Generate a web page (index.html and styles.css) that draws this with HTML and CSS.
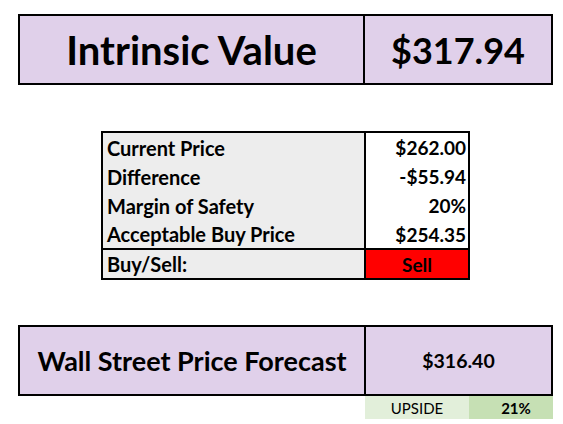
FILE: index.html
```html
<!DOCTYPE html>
<html>
<head>
<meta charset="utf-8">
<link rel="stylesheet" href="styles.css">
</head>
<body>
<div class="page">
  <div class="hero">
    <div class="hero-label">Intrinsic Value</div>
    <div class="hero-value">$317.94</div>
  </div>

  <div class="table">
    <div class="labels">
      <div class="row">Current Price</div>
      <div class="row">Difference</div>
      <div class="row">Margin of Safety</div>
      <div class="row">Acceptable Buy Price</div>
    </div>
    <div class="values">
      <div class="row">$262.00</div>
      <div class="row">-$55.94</div>
      <div class="row">20%</div>
      <div class="row">$254.35</div>
    </div>
    <div class="buy-label">Buy/Sell:</div>
    <div class="buy-value">Sell</div>
  </div>

  <div class="forecast">
    <div class="forecast-label">Wall Street Price Forecast</div>
    <div class="forecast-value">$316.40</div>
  </div>
  <div class="upside">
    <div class="upside-label">UPSIDE</div>
    <div class="upside-value">21%</div>
  </div>
</div>
</body>
</html>
```

FILE: styles.css
```css
html, body {
  margin: 0;
  padding: 0;
  background: #fff;
}
.page {
  font-family: Lato, "Open Sans", sans-serif;
  color: #000;
  display: flex;
  flex-direction: column;
  padding-top: 14px;
}
.hero {
  margin-left: 18px;
  width: 535px;
  height: 71px;
  box-sizing: border-box;
  border: 2px solid #000;
  background: #e0d0ea;
  display: grid;
  grid-template-columns: 345px 1fr;
}
.hero-label, .hero-value {
  display: flex;
  align-items: center;
  justify-content: center;
  font-weight: 700;
  font-size: 40px;
}
.hero-value {
  font-size: 36px;
}
.hero-label {
  border-right: 2px solid #000;
}
.table {
  margin-top: 46px;
  margin-left: 101px;
  width: 369px;
  box-sizing: border-box;
  border: 2px solid #000;
  display: grid;
  grid-template-columns: 263px 102px;
  font-weight: 700;
  font-size: 19px;
}
.labels {
  background: #ededed;
  border-right: 2px solid #000;
  border-bottom: 2px solid #000;
  font-size: 20px;
}
.values {
  background: #fff;
  border-bottom: 2px solid #000;
}
.row {
  height: 29px;
  display: flex;
  align-items: center;
}
.row:last-child {
  height: 28px;
}
.labels .row {
  padding-left: 4px;
}
.values .row {
  justify-content: flex-end;
  padding-right: 2px;
}
.buy-label {
  background: #ededed;
  border-right: 2px solid #000;
  height: 28px;
  display: flex;
  align-items: center;
  padding-left: 4px;
  font-size: 20px;
}
.buy-value {
  background: #ff0000;
  height: 28px;
  display: flex;
  align-items: center;
  justify-content: center;
}
.forecast {
  margin-top: 45px;
  margin-left: 18px;
  width: 535px;
  height: 71px;
  box-sizing: border-box;
  border: 2px solid #000;
  background: #e0d0ea;
  display: grid;
  grid-template-columns: 346px 1fr;
}
.forecast-label, .forecast-value {
  display: flex;
  align-items: center;
  justify-content: center;
  font-weight: 700;
}
.forecast-label {
  border-right: 2px solid #000;
  font-size: 27px;
}
.forecast-value {
  font-size: 19.5px;
}
.upside {
  margin-left: 365px;
  width: 188px;
  height: 23px;
  display: grid;
  grid-template-columns: 104px 84px;
  font-size: 15px;
}
.upside-label, .upside-value {
  display: flex;
  align-items: center;
  justify-content: center;
}
.upside-label {
  background: #e2efda;
}
.upside-value {
  background: #c6e0b4;
  font-weight: 700;
  padding-left: 10px;
}
```
